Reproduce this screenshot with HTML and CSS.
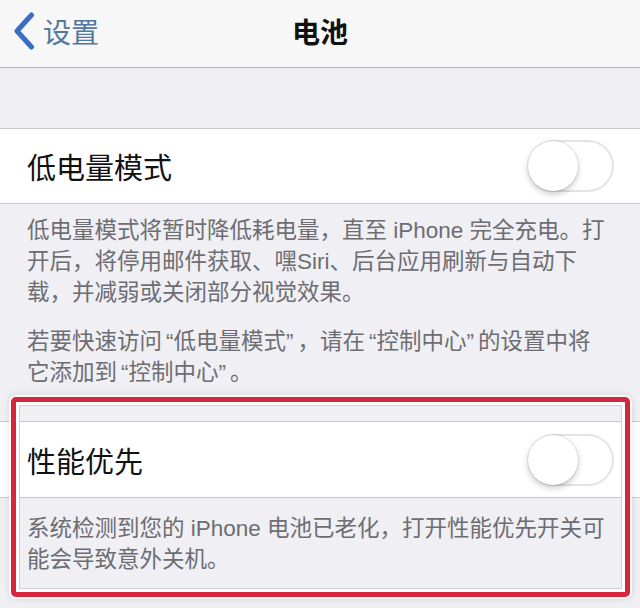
FILE: index.html
```html
<!DOCTYPE html>
<html lang="zh-CN">
<head>
  <meta charset="UTF-8">
  <meta name="viewport" content="width=device-width, initial-scale=1.0">
  <title>电池</title>
  <link rel="stylesheet" href="styles.css">
</head>
<body>
  <div class="screen">
    <!-- Navigation bar -->
    <header class="nav">
      <a class="back" href="#">
        <svg class="chevron" width="22" height="38" viewBox="0 0 22 38">
          <path d="M18.5 3 L4 19 L18.5 35" fill="none" stroke="#3a6dc6" stroke-width="5" stroke-linecap="round" stroke-linejoin="round"/>
        </svg>
        <span>设置</span>
      </a>
      <h1 class="title">电池</h1>
      <span></span>
    </header>

    <!-- Low power mode -->
    <section class="group first">
      <div class="cell">
        <span class="label">低电量模式</span>
        <span class="switch"></span>
      </div>
      <div class="footer">
        <p>低电量模式将暂时降低耗电量，直至 iPhone 完全充电。打开后，将停用邮件获取、嘿Siri、后台应用刷新与自动下载，并减弱或关闭部分视觉效果。</p>
        <p>若要快速访问<q>低电量模式</q>，请在<q>控制中心</q>的设置中将它添加到<q>控制中心</q>。</p>
      </div>
    </section>

    <!-- Performance -->
    <section class="group second">
      <div class="cell tall">
        <span class="label">性能优先</span>
        <span class="switch"></span>
      </div>
      <div class="footer roomy">
        <p>系统检测到您的 iPhone 电池已老化，打开性能优先开关可能会导致意外关机。</p>
      </div>
    </section>

    <!-- Red annotation frame -->
    <div class="highlight"></div>
  </div>
</body>
</html>
```

FILE: styles.css
```css
body {
  margin: 0;
  background-color: #efeff4;
  font-family: "Liberation Sans", "Noto Sans CJK SC", sans-serif;
  color: #111;
}
.screen {
  position: relative;
  height: 608px;
  overflow: hidden;
}
.nav {
  height: 68px;
  box-sizing: border-box;
  padding-bottom: 5px;
  background-color: #f7f7f8;
  border-bottom: 1px solid #b6b6ba;
  display: grid;
  grid-template-columns: 1fr auto 1fr;
  align-items: center;
}
.back {
  display: flex;
  align-items: center;
  gap: 8px;
  padding-left: 13px;
  color: #52789d;
  font-size: 28px;
  text-decoration: none;
}
.chevron {
  display: block;
}
.title {
  margin: 0;
  font-size: 28px;
  font-weight: bold;
  color: #111;
}
.group.first {
  margin-top: 60px;
}
.group.second {
  margin-top: 33px;
}
.cell {
  height: 76px;
  box-sizing: border-box;
  padding: 0 26px 0 27px;
  background-color: #fff;
  border-top: 1px solid #c8c7cc;
  border-bottom: 1px solid #c8c7cc;
  display: flex;
  align-items: center;
  justify-content: space-between;
}
.cell.tall {
  height: 77px;
}
.label {
  font-size: 29px;
}
.switch {
  position: relative;
  width: 86px;
  height: 52px;
  border-radius: 26px;
  background-color: #fff;
  box-shadow: inset 0 0 0 2px #e4e4e8;
}
.switch::after {
  content: "";
  position: absolute;
  top: 1px;
  left: 0;
  width: 50px;
  height: 50px;
  border-radius: 50%;
  background-color: #fff;
  box-shadow: 0 0 0 1px rgba(0, 0, 0, 0.07), 0 3px 6px rgba(0, 0, 0, 0.22);
}
.footer {
  padding: 11px 32px 0 27px;
  font-size: 22.5px;
  line-height: 31px;
  color: #6d6d72;
}
.footer.roomy {
  padding-top: 15px;
}
.footer p {
  margin: 0;
}
.footer p + p {
  margin-top: 18px;
}
.footer q {
  quotes: "“" "”";
}
.footer q::before {
  margin-left: 4px;
}
.footer q::after {
  margin-right: 4px;
}
.highlight {
  position: absolute;
  left: 11px;
  top: 397px;
  width: 619px;
  height: 200px;
  box-sizing: border-box;
  border: 5px solid #d5263e;
  border-radius: 5px;
  box-shadow: 0 0 0 2px rgba(255, 255, 255, 0.8), 0 0 6px 2px rgba(0, 0, 0, 0.12), inset 0 0 0 3px #fff, inset 0 0 0 4px #cfd2d4;
}
```
